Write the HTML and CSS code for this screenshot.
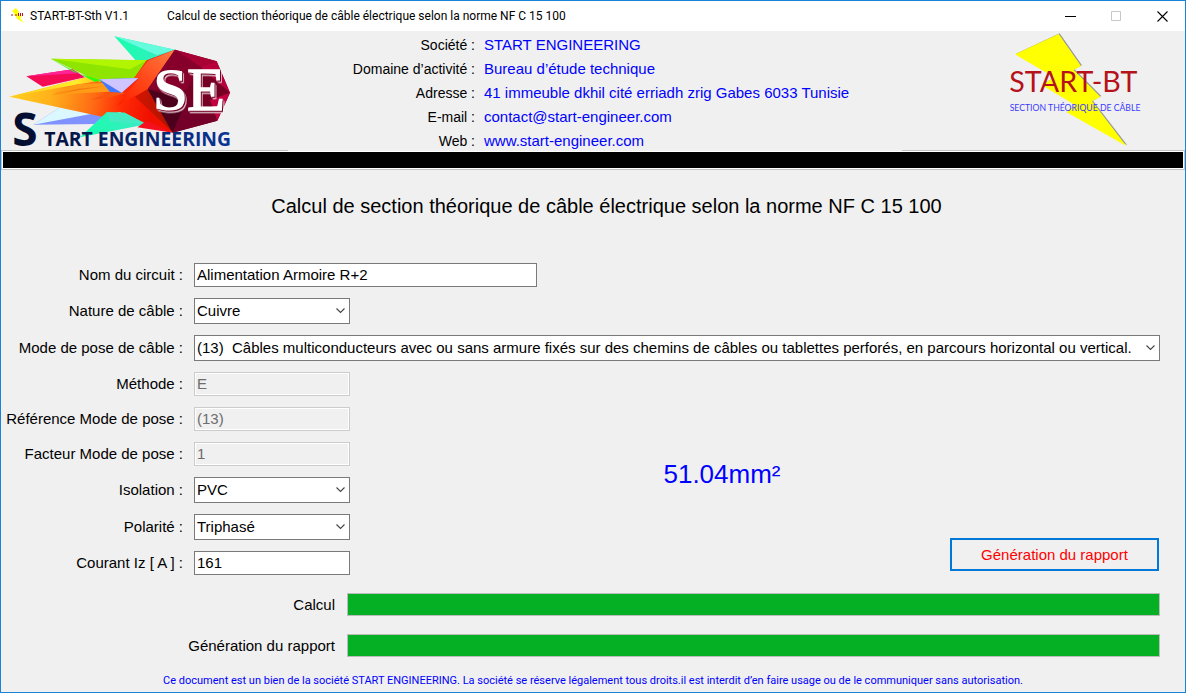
FILE: index.html
```html
<!DOCTYPE html>
<html lang="fr">
<head>
<meta charset="utf-8">
<meta name="viewport" content="width=device-width, initial-scale=1">
<title>START-BT-Sth V1.1</title>
<link rel="stylesheet" href="styles.css">
</head>
<body>
<div class="window">
  <header class="titlebar">
    <svg class="app-icon" viewBox="0 0 16 16" aria-hidden="true">
      <path d="M2 3 6 0 9 4 8 6 12 9 10 10 14 15 6 10 7 9 4 7 5 6Z" fill="#ff0"/>
      <path d="M1 7h2M5 7h2M8.500 5v3M10.500 5v3M12.500 5v3" stroke="#b5121b"/>
    </svg>
    <span class="app-name">START-BT-Sth V1.1</span>
    <span class="app-title">Calcul de section théorique de câble électrique selon la norme NF C 15 100</span>
    <div class="window-controls">
      <button type="button" aria-label="Réduire"><svg viewBox="0 0 11 11"><path d="M0 5.500h11" stroke="#000"/></svg></button>
      <button type="button" aria-label="Agrandir" disabled><svg viewBox="0 0 11 11"><path d="M.5 .5h9v9h-9z" fill="none" stroke="#c8c8c8"/></svg></button>
      <button type="button" aria-label="Fermer"><svg viewBox="0 0 11 11"><path d="M.5 .5l10 10M10.500 .5l-10 10" stroke="#000" stroke-width="1.100"/></svg></button>
    </div>
  </header>

  <section class="company">
    <svg class="logo-company" viewBox="3 93 720 357" role="img" aria-label="Start Engineering">
      <defs>
        <linearGradient id="body" gradientUnits="userSpaceOnUse" x1="28" y1="260" x2="450" y2="340">
          <stop offset="0" stop-color="#ffd21f"/><stop offset=".3" stop-color="#ffb01a"/><stop offset=".6" stop-color="#ff6a14"/><stop offset=".8" stop-color="#ff2a05"/><stop offset="1" stop-color="#f01000"/>
        </linearGradient>
        <linearGradient id="yellow" x1="0" x2="1"><stop offset="0" stop-color="#ffc81e"/><stop offset=".75" stop-color="#ffee2a"/><stop offset="1" stop-color="#ffc31c"/></linearGradient>
        <linearGradient id="flame" gradientUnits="userSpaceOnUse" x1="510" y1="150" x2="370" y2="320"><stop offset="0" stop-color="#ff7a40"/><stop offset=".5" stop-color="#ff4a1c"/><stop offset="1" stop-color="#ff2200"/></linearGradient>
        <linearGradient id="shade" x1="0" x2="1"><stop offset="0" stop-color="#d51500"/><stop offset="1" stop-color="#a81400"/></linearGradient>
        <linearGradient id="navy" gradientUnits="userSpaceOnUse" x1="40" x2="690" y1="0" y2="0"><stop offset="0" stop-color="#020c2c"/><stop offset="1" stop-color="#0a3596"/></linearGradient>
        <linearGradient id="mint" x1="0" x2="1"><stop offset="0" stop-color="#16ffad"/><stop offset="1" stop-color="#3ee8c4"/></linearGradient>
      </defs>
      <path d="M343 109 525 149 440 182 406 180Z" fill="url(#mint)"/>
      <path d="M343 109 525 149 470 165Z" fill="#66fbdc"/>
      <path d="M79 229 218 208 255 232 128 260Z" fill="#f40a55"/>
      <path d="M79 229 218 208 238 220Z" fill="#ff2396"/>
      <path d="M100 374 180 322 310 348 294 372Z" fill="#8092ff"/>
      <path d="M100 374 180 322 285 340Z" fill="#dbf7ff"/>
      <path d="M28 290 275 228 440 181 525 149 443 268 518 398 400 362 360 336 307 350Z" fill="url(#body)"/>
      <path d="M28 290 275 228 290 244 205 258Z" fill="url(#yellow)"/>
      <path d="M155 284 230 253 320 248 330 275 210 281Z" fill="#ff9b17"/>
      <path d="M155 284 235 266 320 258 240 270Z" fill="#f57910"/>
      <path d="M272 299 350 272 376 280 330 292Z" fill="#f85510"/>
      <path d="M152 176 440 181 402 235 298 246Z" fill="#8ee600"/>
      <path d="M152 176 440 181 390 208Z" fill="#b2f502"/>
      <path d="M152 176 220 215 300 240 286 246Z" fill="#28ff08"/>
      <path d="M525 149 443 182 402 235 415 236 350 318 443 268Z" fill="url(#flame)"/>
      <path d="M443 268 405 290 520 398Z" fill="url(#shade)"/>
      <path d="M298 238 415 234 365 278 330 276Z" fill="#4478ff"/>
      <path d="M298 238 415 234 365 278Z" fill="#cfc5ff"/>
      <path d="M240 412 320 337 374 338 440 373Z" fill="url(#mint)"/>
      <path d="M320 337 374 338 440 373 330 365Z" fill="#42ebc1"/>
      <path d="M412 382 440 362 518 398Z" fill="#f5101e"/>
      <path d="M525 149 650 184 690 278 652 362 518 398 443 268Z" fill="#750024"/>
      <path d="M525 149 650 184 600 200Z" fill="#a80034"/>
      <path d="M650 184 690 278 600 200Z" fill="#b8003c"/>
      <path d="M690 278 652 362 630 300Z" fill="#c00040"/>
      <path d="M525 149 600 200 560 270 443 268Z" fill="#86002b"/>
      <path d="M443 268 560 300 518 398Z" fill="#4c001b"/>
      <path d="M518 398 560 300 652 362Z" fill="#74002a"/>
      <g class="logo-initials" fill="#fff"><text x="460" y="331">S</text><text class="initial-e" x="562" y="329">E</text></g>
      <g class="logo-wordmark" fill="url(#navy)"><text class="logo-capital" x="37" y="438">S</text><text class="logo-rest" x="133" y="438">TART ENGINEERING</text></g>
    </svg>

    <dl class="company-info">
      <dt>Société :</dt><dd>START ENGINEERING</dd>
      <dt>Domaine d’activité :</dt><dd>Bureau d’étude technique</dd>
      <dt>Adresse :</dt><dd>41 immeuble dkhil cité erriadh zrig Gabes 6033 Tunisie</dd>
      <dt>E-mail :</dt><dd><a href="mailto:contact@start-engineer.com">contact@start-engineer.com</a></dd>
      <dt>Web :</dt><dd><a href="http://www.start-engineer.com">www.start-engineer.com</a></dd>
    </dl>

    <svg class="logo-product" viewBox="330 93 450 357" role="img" aria-label="START-BT, section théorique de câble">
      <path d="M503 102 570 198 548 210 628 290 603 304 706 438 527 337 552 315 452 255 490 232 372 163Z" fill="#999" transform="translate(3 -2)"/>
      <path d="M503 102 570 198 548 210 628 290 603 304 706 438 527 337 552 315 452 255 490 232 372 163Z" fill="#ff0"/>
      <text class="product-name" x="355" y="275">START-BT</text>
      <text class="product-sub" x="356" y="333">SECTION THÉORIQUE DE CÂBLE</text>
    </svg>
  </section>
  <div class="band"></div>

  <main class="content">
    <h1>Calcul de section théorique de câble électrique selon la norme NF C 15 100</h1>
    <form class="form">
      <label for="nom">Nom du circuit :</label>
      <input id="nom" class="field wide medium" type="text" value="Alimentation Armoire R+2">

      <label for="nature">Nature de câble :</label>
      <div class="combo"><select id="nature" class="field"><option>Cuivre</option></select><svg viewBox="0 0 9 6"><path d="M.5 .5l4 4 4-4"/></svg></div>

      <label for="pose">Mode de pose de câble :</label>
      <div class="combo wide"><select id="pose" class="field"><option>(13)&nbsp; Câbles multiconducteurs avec ou sans armure fixés sur des chemins de câbles ou tablettes perforés, en parcours horizontal ou vertical.</option></select><svg viewBox="0 0 9 6"><path d="M.5 .5l4 4 4-4"/></svg></div>

      <label for="methode">Méthode :</label>
      <input id="methode" class="field" type="text" value="E" disabled>

      <label for="reference">Référence Mode de pose :</label>
      <input id="reference" class="field" type="text" value="(13)" disabled>

      <label for="facteur">Facteur Mode de pose :</label>
      <input id="facteur" class="field" type="text" value="1" disabled>

      <label for="isolation">Isolation :</label>
      <div class="combo"><select id="isolation" class="field"><option>PVC</option></select><svg viewBox="0 0 9 6"><path d="M.5 .5l4 4 4-4"/></svg></div>

      <label for="polarite">Polarité :</label>
      <div class="combo"><select id="polarite" class="field"><option>Triphasé</option></select><svg viewBox="0 0 9 6"><path d="M.5 .5l4 4 4-4"/></svg></div>

      <label for="courant">Courant Iz [ A ] :</label>
      <input id="courant" class="field" type="text" value="161">

      <div class="outcome">
        <output class="result" for="nom nature pose isolation polarite courant">51.04mm²</output>
        <button class="report" type="button">Génération du rapport</button>
      </div>
    </form>

    <div class="progress-list">
      <label for="p-calcul">Calcul</label><progress id="p-calcul" value="100" max="100"></progress>
      <label for="p-rapport">Génération du rapport</label><progress id="p-rapport" value="100" max="100"></progress>
    </div>
  </main>
  <footer class="notice">Ce document est un bien de la société START ENGINEERING. La société se réserve légalement tous droits.il est interdit d’en faire usage ou de le communiquer sans autorisation.</footer>
</div>
</body>
</html>
```
FILE: styles.css
```css
* { box-sizing: border-box; }

body {
  margin: 0;
  background: #f0f0f0;
  color: #000;
  font: 15px/24px "Liberation Sans", Arial, sans-serif;
}

.window {
  display: flex;
  flex-direction: column;
  min-height: 100vh;
  border: 1px solid #1883d7;
}

/* Title bar */
.titlebar {
  display: flex;
  align-items: center;
  height: 30px;
  padding-left: 9px;
  background: #fff;
  font: 12px/16px Roboto, "Noto Sans", sans-serif;
}
.app-icon { width: 16px; height: 16px; margin-right: 4px; }
.app-title { margin-left: 38px; }
.window-controls { display: flex; margin-left: auto; height: 100%; }
.window-controls button {
  display: grid;
  place-items: center;
  width: 46px;
  padding: 0;
  border: 0;
  background: none;
}
.window-controls svg { width: 11px; height: 11px; }

/* Company header */
.company {
  display: grid;
  grid-template-columns: 287px 1fr 283px;
  grid-template-rows: 119px;
}
.logo-company { width: 240px; height: 119px; overflow: visible; }
.logo-product { width: 150px; height: 119px; margin-left: 99px; overflow: visible; }
.logo-initials {
  font: bold 184px "Liberation Serif", serif;
  filter: drop-shadow(3px 4px 0 #750024) drop-shadow(2px 3px 0 #fff);
}
.initial-e { font-weight: 400; stroke: #fff; stroke-width: 5px; }
.logo-wordmark { font-family: "Open Sans", sans-serif; font-weight: 700; }
.logo-capital { font-size: 138px; }
.logo-rest { font-size: 58px; }
.product-name { font: 86px Lato, sans-serif; fill: #b5121b; }
.product-sub { font: 26px Lato, sans-serif; fill: #3a3aff; }

.company-info {
  position: relative;
  display: grid;
  grid-template-columns: 187px 1fr;
  grid-auto-rows: 24px;
  column-gap: 9px;
  margin: 0 0 -1px;
  padding-top: 2px;
  background: #f0f0f0;
}
.company-info dt { font-size: 14px; text-align: right; }
.company-info dd { margin: 0; color: #00f; white-space: nowrap; }
.company-info a { color: inherit; text-decoration: none; }

.band {
  height: 20px;
  padding: 1px;
  border: 1px solid #c3c3c3;
  background: #000 content-box;
  box-shadow: inset 0 0 0 1px #fff;
}

/* Form */
.content { padding: 24px 25px 0 0; }
h1 {
  margin: 0 0 45px 52px;
  font-size: 20px;
  font-weight: 400;
  line-height: 24px;
  text-align: center;
}
.form {
  display: grid;
  grid-template-columns: 182px 167px 1fr;
  align-items: center;
  gap: 11px 0;
}
.form label { grid-column: 1; text-align: right; white-space: nowrap; line-height: 24px; }
.field {
  width: 100%;
  height: 24px;
  padding: 0 2px;
  border: 1px solid #7a7a7a;
  border-radius: 0;
  background: #fff;
  color: #000;
  font: inherit;
}
.form > .field, .combo { grid-column: 2; margin-left: 11px; width: auto; }
.form > .wide { grid-column: 2 / 4; }
.form > .medium { width: 343px; }
.field:disabled {
  border-color: #ccc;
  background: #f0f0f0;
  box-shadow: inset 0 0 0 1px #fff;
  color: #6d6d6d;
}
.combo { display: grid; align-items: center; }
.combo > * { grid-area: 1 / 1; }
.combo .field { appearance: none; height: 26px; padding-right: 20px; }
.combo svg {
  z-index: 1;
  justify-self: end;
  width: 9px;
  height: 6px;
  margin-right: 5px;
  pointer-events: none;
}
.combo path { fill: none; stroke: #444; stroke-width: 1.1; }

.outcome {
  grid-column: 3;
  grid-row: 4 / 10;
  align-self: stretch;
  display: flex;
  flex-direction: column;
  justify-content: flex-end;
  gap: 48px;
  padding-bottom: 4px;
}
.result { align-self: center; margin-right: 66px; color: #00f; font-size: 26px; line-height: 32px; }
.report {
  align-self: flex-end;
  width: 209px;
  height: 33px;
  margin-right: 1px;
  padding: 0;
  border: 2px solid #0078d7;
  background: #f0f0f0;
  color: #f00;
  font: inherit;
}

/* Progress */
.progress-list {
  display: grid;
  grid-template-columns: 334px 1fr;
  align-items: center;
  row-gap: 18px;
  margin-top: 18px;
}
.progress-list label { text-align: right; line-height: 23px; }
progress {
  appearance: none;
  display: block;
  height: 23px;
  width: auto;
  margin-left: 12px;
  border: 1px solid #bcbcbc;
  background: #e6e6e6;
}
progress::-webkit-progress-bar { background: #e6e6e6; }
progress::-webkit-progress-value { background: #06b025; }

.notice {
  margin-top: 16px;
  color: #00f;
  font: 11px/16px Roboto, sans-serif;
  text-align: center;
}
```
